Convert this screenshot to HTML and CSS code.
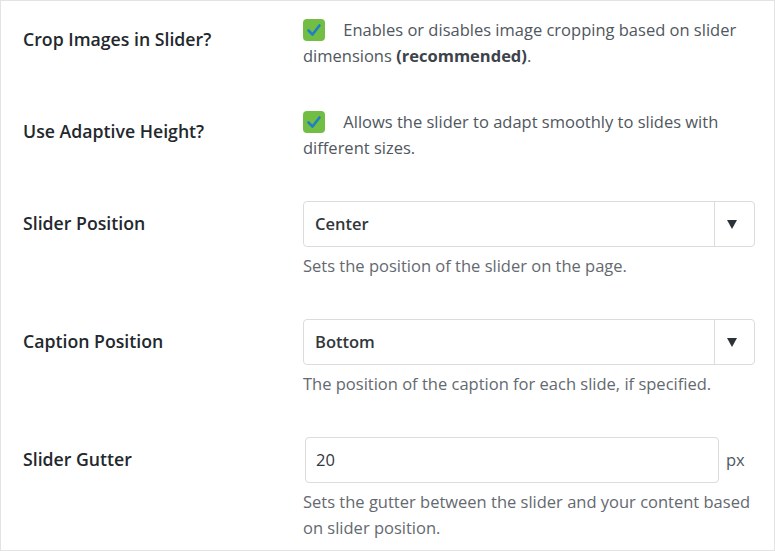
FILE: index.html
```html
<!DOCTYPE html>
<html>
<head>
<meta charset="utf-8">
<link rel="stylesheet" href="styles.css">
</head>
<body>
<div class="panel">
  <div class="row">
    <div class="label">Crop Images in Slider?</div>
    <div class="field">
      <p class="check-line"><span class="checkbox"><svg viewBox="0 0 22 22" width="22" height="22"><path d="M5.5 11.5 L9.5 15.5 L16.5 6.5" fill="none" stroke="#1f7ec4" stroke-width="2.6" stroke-linecap="round" stroke-linejoin="round"/></svg></span> Enables or disables image cropping based on slider dimensions <strong>(recommended)</strong>.</p>
    </div>
  </div>
  <div class="row">
    <div class="label">Use Adaptive Height?</div>
    <div class="field">
      <p class="check-line"><span class="checkbox"><svg viewBox="0 0 22 22" width="22" height="22"><path d="M5.5 11.5 L9.5 15.5 L16.5 6.5" fill="none" stroke="#1f7ec4" stroke-width="2.6" stroke-linecap="round" stroke-linejoin="round"/></svg></span> Allows the slider to adapt smoothly to slides with different sizes.</p>
    </div>
  </div>
  <div class="row">
    <div class="label">Slider Position</div>
    <div class="field">
      <div class="select"><span class="select-value">Center</span><span class="select-arrow"><span class="tri"></span></span></div>
      <p class="desc">Sets the position of the slider on the page.</p>
    </div>
  </div>
  <div class="row">
    <div class="label">Caption Position</div>
    <div class="field">
      <div class="select"><span class="select-value">Bottom</span><span class="select-arrow"><span class="tri"></span></span></div>
      <p class="desc">The position of the caption for each slide, if specified.</p>
    </div>
  </div>
  <div class="row">
    <div class="label">Slider Gutter</div>
    <div class="field">
      <div class="input-line"><div class="input">20</div><span class="unit">px</span></div>
      <p class="desc">Sets the gutter between the slider and your content based on slider position.</p>
    </div>
  </div>
</div>
</body>
</html>
```

FILE: styles.css
```css
html, body {
  margin: 0;
  padding: 0;
  background: #ffffff;
}
body {
  font-family: "Open Sans", "Noto Sans", sans-serif;
  font-size: 16.5px;
  color: #50575e;
}
.panel {
  box-sizing: border-box;
  width: 775px;
  height: 551px;
  border: 1px solid #e3e3e3;
  padding: 16px 19px 0 22px;
  display: flex;
  flex-direction: column;
  gap: 40px;
}
.row {
  display: grid;
  grid-template-columns: 280px 1fr;
}
.label {
  padding-top: 10px;
  line-height: 24px;
  font-weight: 600;
  font-size: 17.7px;
  color: #23282d;
}
.field {
  line-height: 26px;
  min-width: 0;
}
p {
  margin: 0;
}
.check-line {
  color: #50575e;
}
.check-line strong {
  font-weight: 700;
  color: #3c434a;
}
.checkbox {
  display: inline-block;
  width: 22px;
  height: 22px;
  border-radius: 4px;
  background: #72be44;
  vertical-align: -5px;
  margin-right: 14px;
}
.checkbox svg {
  display: block;
}
.select {
  box-sizing: border-box;
  height: 46px;
  border: 1px solid #dcdcde;
  border-radius: 4px;
  display: flex;
  align-items: stretch;
}
.select-value {
  flex: 1;
  display: flex;
  align-items: center;
  padding-left: 11px;
  font-weight: 600;
  color: #32373c;
}
.select-arrow {
  width: 40px;
  border-left: 1px solid #dcdcde;
  display: flex;
  align-items: center;
  justify-content: center;
  padding-right: 5px;
  box-sizing: border-box;
}
.tri {
  width: 0;
  height: 0;
  border-left: 5px solid transparent;
  border-right: 5px solid transparent;
  border-top: 9px solid #2c3338;
}
.desc {
  margin-top: 6px;
  color: #646970;
}
.input-line {
  display: flex;
  align-items: center;
  padding-left: 2px;
}
.input {
  box-sizing: border-box;
  width: 414px;
  height: 46px;
  border: 1px solid #dcdcde;
  border-radius: 4px;
  display: flex;
  align-items: center;
  padding-left: 10px;
  color: #32373c;
}
.unit {
  margin-left: 7px;
}
```
